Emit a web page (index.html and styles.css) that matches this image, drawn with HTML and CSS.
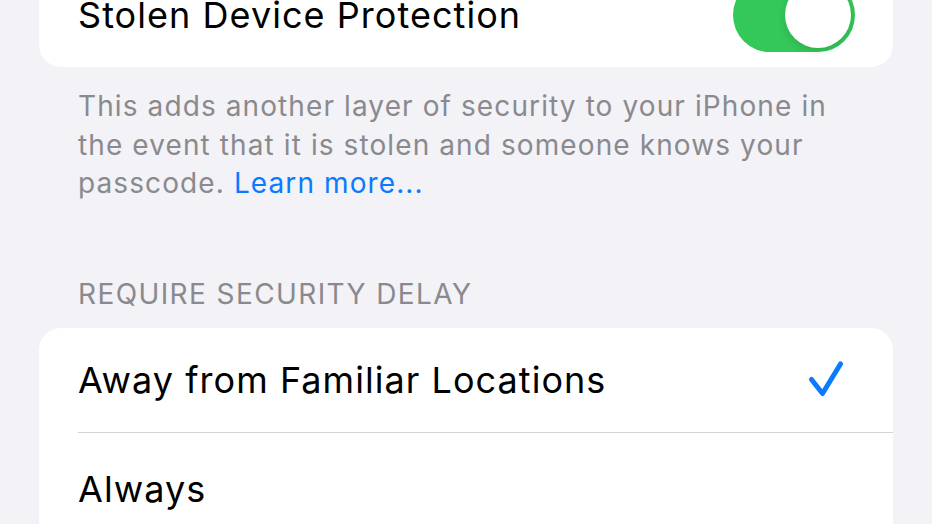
FILE: index.html
```html
<!DOCTYPE html>
<html>
<head>
<meta charset="utf-8">
<link rel="stylesheet" href="styles.css">
</head>
<body>
<div class="page">
  <div class="card card-top">
    <div class="row">
      <span class="label">Stolen Device Protection</span>
      <span class="toggle"><span class="knob"></span></span>
    </div>
  </div>
  <p class="footer">This adds another layer of security to your iPhone in the event that it is stolen and someone knows your passcode. <span class="link">Learn more...</span></p>
  <h2 class="section-header">REQUIRE SECURITY DELAY</h2>
  <div class="card">
    <div class="row row-sep">
      <span class="label">Away from Familiar Locations</span>
      <svg class="check" width="40" height="40" viewBox="0 0 40 40"><path d="M4.5 19.5 L15.5 33.5 L33.5 4" fill="none" stroke="#0a7aff" stroke-width="5" stroke-linecap="round" stroke-linejoin="round"/></svg>
    </div>
    <div class="row row-last">
      <span class="label">Always</span>
    </div>
  </div>
</div>
</body>
</html>
```

FILE: styles.css
```css
html, body {
  margin: 0;
  padding: 0;
  background: #f2f2f7;
  overflow: hidden;
  font-family: Inter, "Noto Sans", sans-serif;
}
.page {
  padding: 0 39px;
}
.card {
  background: #ffffff;
  border-radius: 22px;
  overflow: hidden;
}
.card-top {
  margin-top: -38px;
}
.row {
  height: 105px;
  display: flex;
  align-items: center;
  justify-content: space-between;
  padding: 0 38px 0 39px;
  position: relative;
}
.row-last {
  padding-top: 4px;
}
.row-sep::after {
  content: "";
  position: absolute;
  left: 39px;
  right: 0;
  bottom: 0;
  height: 1px;
  background: #d4d4d8;
}
.label {
  font-size: 36px;
  color: #000;
  letter-spacing: 1.05px;
}
.toggle {
  width: 122px;
  height: 74px;
  border-radius: 37px;
  background: #34c759;
  position: relative;
}
.knob {
  position: absolute;
  right: 4px;
  top: 4px;
  width: 66px;
  height: 66px;
  border-radius: 50%;
  background: #fff;
  box-shadow: 0 3px 8px rgba(0,0,0,0.12);
}
.footer {
  margin: 0;
  padding: 20px 39px 0 39px;
  font-size: 28px;
  line-height: 38.5px;
  letter-spacing: 1.1px;
  color: #8a8a8e;
}
.link {
  color: #0a7aff;
}
.section-header {
  margin: 0;
  padding: 74px 39px 17px 39px;
  font-size: 28px;
  font-weight: 400;
  line-height: 34px;
  letter-spacing: 1.4px;
  color: #8a8a8e;
}
.check {
  margin-right: 8px;
}
```
